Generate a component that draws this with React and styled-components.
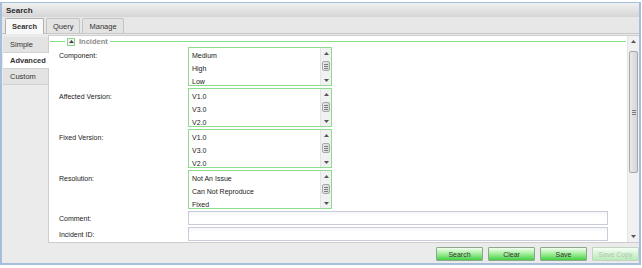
import React from "react";
import styled, { createGlobalStyle } from "styled-components";

const GlobalStyle = createGlobalStyle`
  html, body {
    margin: 0;
    padding: 0;
    background: #ffffff;
  }
  body {
    font-family: "Liberation Sans", Arial, sans-serif;
    font-size: 7px;
    color: #222;
  }
`;

const fields = [
  { label: "Component:", options: ["Medium", "High", "Low"] },
  { label: "Affected Version:", options: ["V1.0", "V3.0", "V2.0"] },
  { label: "Fixed Version:", options: ["V1.0", "V3.0", "V2.0"] },
  { label: "Resolution:", options: ["Not An Issue", "Can Not Reproduce", "Fixed"] },
];

const Arrow = ({ down }) => (
  <svg width="5" height="3" viewBox="0 0 5 3">
    <path d={down ? "M0 0 L5 0 L2.5 3 Z" : "M0 3 L5 3 L2.5 0 Z"} fill="#555" />
  </svg>
);

function ScrollBar({ width, thumbTop, thumbHeight }) {
  return (
    <Bar $w={width}>
      <ArrowBox $h={width - 1}>
        <Arrow />
      </ArrowBox>
      <Track>
        <Thumb $top={thumbTop} $h={thumbHeight}>
          <Grip />
          <Grip />
          <Grip />
        </Thumb>
      </Track>
      <ArrowBox $h={width - 1}>
        <Arrow down />
      </ArrowBox>
    </Bar>
  );
}

export default function App() {
  return (
    <>
      <GlobalStyle />
      <Window>
        <TitleBar>Search</TitleBar>
        <TabStrip>
          <Tab $active>Search</Tab>
          <Tab>Query</Tab>
          <Tab>Manage</Tab>
        </TabStrip>
        <Body>
          <SideTabs>
            <SideTab>Simple</SideTab>
            <SideTab $active>Advanced</SideTab>
            <SideTab>Custom</SideTab>
          </SideTabs>
          <Panel>
            <ScrollArea>
              <Fieldset>
                <Legend>
                  <Toggle>
                    <svg width="5" height="3" viewBox="0 0 5 3">
                      <path d="M0 3 L5 3 L2.5 0 Z" fill="#444" />
                    </svg>
                  </Toggle>
                  Incident
                </Legend>
                <Form>
                  {fields.map((f) => (
                    <React.Fragment key={f.label}>
                      <Label $top>{f.label}</Label>
                      <ListBox>
                        <Options>
                          {f.options.map((o) => (
                            <Option key={o}>{o}</Option>
                          ))}
                        </Options>
                        <ScrollBar width={11} thumbTop={3} thumbHeight={10} />
                      </ListBox>
                    </React.Fragment>
                  ))}
                  <Label>Comment:</Label>
                  <TextInput />
                  <Label>Incident ID:</Label>
                  <TextInput />
                </Form>
              </Fieldset>
            </ScrollArea>
            <ScrollBar width={12} thumbTop={4} thumbHeight={122} />
          </Panel>
        </Body>
        <Footer>
          <Button>Search</Button>
          <Button>Clear</Button>
          <Button>Save</Button>
          <Button disabled>Save Copy</Button>
        </Footer>
      </Window>
    </>
  );
}

const Window = styled.div`
  margin-top: 2px;
  width: 641px;
  height: 263px;
  box-sizing: border-box;
  border: 2px solid #a6bedc;
  border-top-width: 1px;
  background: #ebebeb;
  display: flex;
  flex-direction: column;
  overflow: hidden;
`;

const TitleBar = styled.div`
  height: 14px;
  flex: none;
  padding-left: 4px;
  display: flex;
  align-items: center;
  font-size: 8px;
  font-weight: bold;
  color: #2a2a2a;
  background: linear-gradient(#f0f0f0, #d5d5d5);
`;

const TabStrip = styled.div`
  height: 17px;
  flex: none;
  box-sizing: border-box;
  display: flex;
  align-items: flex-end;
  gap: 2px;
  padding-left: 3px;
  background: #e7e7e7;
  border-bottom: 1px solid #c6c6c6;
`;

const Tab = styled.div`
  box-sizing: border-box;
  padding: 0 6px;
  display: flex;
  align-items: center;
  font-size: 7.5px;
  font-weight: ${(p) => (p.$active ? "bold" : "normal")};
  color: #333;
  background: ${(p) => (p.$active ? "#f8f8f8" : "#e3e3e3")};
  border: 1px solid ${(p) => (p.$active ? "#b0b0b0" : "#c4c4c4")};
  border-bottom: none;
  border-radius: 2px 2px 0 0;
  margin-bottom: ${(p) => (p.$active ? "-1px" : "0")};
  height: ${(p) => (p.$active ? "16px" : "15px")};
`;

const Body = styled.div`
  height: 210px;
  flex: none;
  display: flex;
  padding: 1px 0 1px 1px;
  box-sizing: border-box;
`;

const SideTabs = styled.div`
  width: 45px;
  flex: none;
  display: flex;
  flex-direction: column;
  padding-top: 2px;
`;

const SideTab = styled.div`
  height: 16px;
  box-sizing: border-box;
  padding-left: 7px;
  display: flex;
  align-items: center;
  font-size: 7.5px;
  font-weight: ${(p) => (p.$active ? "bold" : "normal")};
  color: #333;
  background: ${(p) => (p.$active ? "#ffffff" : "#e3e3e3")};
  border-bottom: 1px solid #d2d2d2;
  margin-right: ${(p) => (p.$active ? "-1px" : "0")};
  position: relative;
  z-index: ${(p) => (p.$active ? 1 : 0)};
`;

const Panel = styled.div`
  flex: 1;
  display: flex;
  background: #ffffff;
  border: 1px solid #cdcdcd;
  border-right: none;
  min-width: 0;
`;

const ScrollArea = styled.div`
  flex: 1;
  overflow: hidden;
  padding-top: 1px;
`;

const Fieldset = styled.fieldset`
  margin: 0 1px;
  padding: 0 0 0 9px;
  border: none;
  border-top: 1px solid #86e086;
`;

const Legend = styled.legend`
  margin-left: 6px;
  padding: 0 2px;
  display: flex;
  align-items: center;
  gap: 4px;
  font-size: 7.5px;
  font-weight: bold;
  color: #8c8c8c;
  line-height: 9px;
`;

const Toggle = styled.span`
  width: 8px;
  height: 8px;
  box-sizing: border-box;
  border: 1px solid #86d886;
  background: #f4f4f4;
  display: flex;
  align-items: center;
  justify-content: center;
`;

const Form = styled.div`
  display: grid;
  grid-template-columns: 129px 420px;
  row-gap: 2px;
  padding-top: 1px;
`;

const Label = styled.div`
  line-height: 13px;
  padding-top: ${(p) => (p.$top ? "2px" : "0")};
  align-self: ${(p) => (p.$top ? "start" : "center")};
  color: #222;
`;

const ListBox = styled.div`
  width: 144px;
  height: 39px;
  box-sizing: border-box;
  border: 1px solid #8edc8e;
  display: flex;
  background: #fff;
`;

const Options = styled.div`
  flex: 1;
  padding: 1px 0 0 3px;
`;

const Option = styled.div`
  line-height: 13px;
  color: #1a1a1a;
  white-space: nowrap;
`;

const TextInput = styled.input`
  width: 420px;
  height: 14px;
  box-sizing: border-box;
  margin: 0;
  border: 1px solid #c9cbdb;
  background: linear-gradient(#f6f6f6, #ffffff 40%);
  font: inherit;
  padding: 0 2px;
`;

const Bar = styled.div`
  width: ${(p) => p.$w}px;
  flex: none;
  display: flex;
  flex-direction: column;
  background: #f1f1f1;
  border-left: 1px solid #e4e4e4;
  box-sizing: border-box;
`;

const ArrowBox = styled.div`
  height: ${(p) => p.$h}px;
  flex: none;
  display: flex;
  align-items: center;
  justify-content: center;
`;

const Track = styled.div`
  flex: 1;
  display: flex;
  flex-direction: column;
  align-items: center;
`;

const Thumb = styled.div`
  margin-top: ${(p) => p.$top}px;
  width: calc(100% - 2px);
  height: ${(p) => p.$h}px;
  box-sizing: border-box;
  border: 1px solid #a8a8a8;
  border-radius: 2px;
  background: linear-gradient(90deg, #e9e9e9, #d6d6d6);
  display: flex;
  flex-direction: column;
  align-items: center;
  justify-content: center;
  gap: 1px;
`;

const Grip = styled.div`
  width: 4px;
  height: 1px;
  background: #7d7d7d;
`;

const Footer = styled.div`
  flex: 1;
  display: flex;
  justify-content: flex-end;
  align-items: flex-start;
  gap: 5px;
  padding: 3px 0 0 0;
`;

const Button = styled.button`
  width: 47px;
  height: 14px;
  margin: 0;
  padding: 0;
  box-sizing: border-box;
  font-family: "Liberation Sans", Arial, sans-serif;
  font-size: 7px;
  color: ${(p) => (p.disabled ? "#b4c4b4" : "#333")};
  border: 1px solid ${(p) => (p.disabled ? "#c4d2c4" : "#8ea68e")};
  border-radius: 1px;
  background: ${(p) =>
    p.disabled
      ? "linear-gradient(#f6fff6, #d4f4d4 50%, #b8ecb8)"
      : "linear-gradient(#f2fff0, #a8f0a0 45%, #44d044)"};
`;
